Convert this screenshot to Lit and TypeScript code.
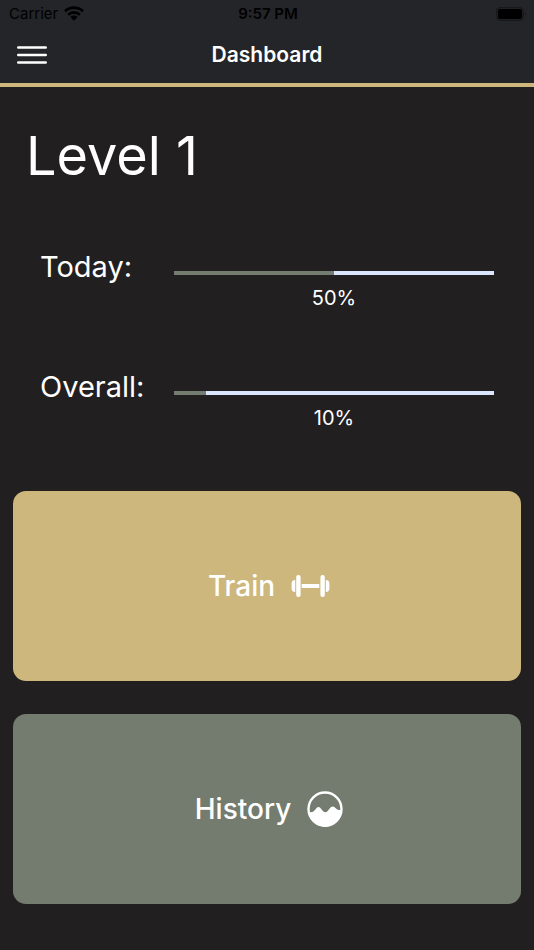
import { LitElement, html, css } from "lit";
import { customElement, property } from "lit/decorators.js";

@customElement("progress-row")
class ProgressRow extends LitElement {
  @property() label = "";
  @property({ type: Number }) value = 0;

  static styles = css`
    :host {
      display: grid;
      grid-template-columns: 134px 1fr;
      height: 120px;
    }
    label {
      font-size: 29px;
      line-height: 40px;
      white-space: nowrap;
    }
    .meter {
      display: flex;
      flex-direction: column;
      align-items: center;
      gap: 8px;
      padding-top: 24px;
    }
    progress {
      appearance: none;
      display: block;
      width: 100%;
      height: 4px;
      border: 0;
      background: #d9e6fd;
    }
    progress::-webkit-progress-bar {
      background: #d9e6fd;
    }
    progress::-webkit-progress-value {
      background: #747c70;
    }
    .percent {
      font-size: 20px;
      line-height: 30px;
    }
  `;

  render() {
    return html`
      <label for="bar">${this.label}</label>
      <div class="meter">
        <progress id="bar" max="100" .value=${this.value}></progress>
        <span class="percent">${this.value}%</span>
      </div>
    `;
  }
}

@customElement("app-root")
class AppRoot extends LitElement {
  static styles = css`
    :host {
      display: block;
      min-height: 100vh;
      background: #221f20;
      color: #fff;
      font-family: Inter, "Liberation Sans", sans-serif;
    }
    header {
      background: #242529;
      border-bottom: 4px solid #cdb77c;
    }
    .status {
      display: grid;
      grid-template-columns: 1fr auto 1fr;
      align-items: center;
      height: 27px;
      padding: 0 7px 0 9px;
      color: #000;
      font-size: 15px;
      line-height: 27px;
    }
    .carrier {
      display: flex;
      align-items: center;
      gap: 6px;
    }
    .time {
      font-weight: 600;
    }
    .battery {
      justify-self: end;
    }
    svg {
      display: block;
    }
    .nav {
      display: grid;
      grid-template-columns: 1fr auto 1fr;
      align-items: center;
      height: 56px;
      padding: 0 17px;
    }
    button {
      border: 0;
      padding: 0;
      color: inherit;
      font-family: inherit;
      cursor: pointer;
    }
    .menu {
      justify-self: start;
      background: none;
    }
    h1 {
      margin: 0;
      font-size: 21px;
      line-height: 56px;
      font-weight: 600;
    }
    h2 {
      margin: 0;
      padding: 34px 26px 0;
      font-size: 54px;
      line-height: 70px;
      font-weight: 400;
    }
    .progress {
      padding: 56px 40px 0;
    }
    .actions {
      display: flex;
      flex-direction: column;
      gap: 33px;
      padding: 4px 13px 46px;
    }
    .card {
      display: flex;
      align-items: center;
      justify-content: center;
      gap: 16px;
      height: 190px;
      padding-left: 4px;
      border-radius: 13px;
      font-size: 28px;
      line-height: 40px;
      font-weight: 500;
    }
    .train {
      background: #cdb77c;
    }
    .history {
      background: #747c70;
    }
  `;

  render() {
    return html`
      <header>
        <div class="status">
          <span class="carrier">
            Carrier
            <svg width="20" height="15" viewBox="0 0 20 15" aria-hidden="true">
              <g fill="none" stroke="#000" stroke-width="2.7">
                <path d="M1 5.3a13 13 0 0 1 18 0" />
                <path d="M4.2 8.7a8.4 8.4 0 0 1 11.6 0" />
              </g>
              <path d="M6.4 11a5.2 5.2 0 0 1 7.2 0L10 14.7z" />
            </svg>
          </span>
          <span class="time">9:57 PM</span>
          <svg class="battery" width="31" height="14" viewBox="0 0 31 14" aria-hidden="true">
            <rect x=".7" y=".7" width="26.6" height="12.6" rx="3.6" fill="none" stroke="#17181a" stroke-width="1.3" />
            <rect x="2" y="2" width="24" height="10" rx="2" />
            <path d="M29 5q1.7 2 0 4z" fill="#17181a" />
          </svg>
        </div>
        <div class="nav">
          <button class="menu" aria-label="Open menu">
            <svg width="30" height="20" viewBox="0 0 30 20">
              <path d="M1.3 2.5h27.4M1.3 10h27.4M1.3 17.5h27.4" stroke="#fff" stroke-width="2.6" stroke-linecap="round" />
            </svg>
          </button>
          <h1>Dashboard</h1>
        </div>
      </header>
      <main>
        <h2>Level 1</h2>
        <section class="progress">
          <progress-row label="Today:" .value=${50}></progress-row>
          <progress-row label="Overall:" .value=${10}></progress-row>
        </section>
        <section class="actions">
          <button class="card train">
            Train
            <svg width="39" height="24" viewBox="0 0 39 24" fill="#fff" aria-hidden="true">
              <path d="M4.2 6v12a3.6 3.6 0 0 1-3.6-3.2V9.2A3.6 3.6 0 0 1 4.2 6zM34.8 6v12a3.6 3.6 0 0 0 3.6-3.2V9.2A3.6 3.6 0 0 0 34.8 6z" />
              <rect x="5.2" y="1" width="4.4" height="22" rx="2" />
              <rect x="29.4" y="1" width="4.4" height="22" rx="2" />
              <rect x="10.7" y="10" width="17.6" height="4" />
            </svg>
          </button>
          <button class="card history">
            History
            <svg width="36" height="36" viewBox="0 0 36 36" aria-hidden="true">
              <circle cx="18" cy="18" r="16.5" fill="none" stroke="#fff" stroke-width="2.4" />
              <path d="M1.5 20.500Q5 22.500 8 19c2.500-4 4.500-4 7 0q3.500 4.500 6.500 0c3-4.500 5-4.500 7.500-1.500q2.500 2.500 5.500 1A16.500 16.500 0 0 1 1.500 20.500z" fill="#fff" />
            </svg>
          </button>
        </section>
      </main>
    `;
  }
}
